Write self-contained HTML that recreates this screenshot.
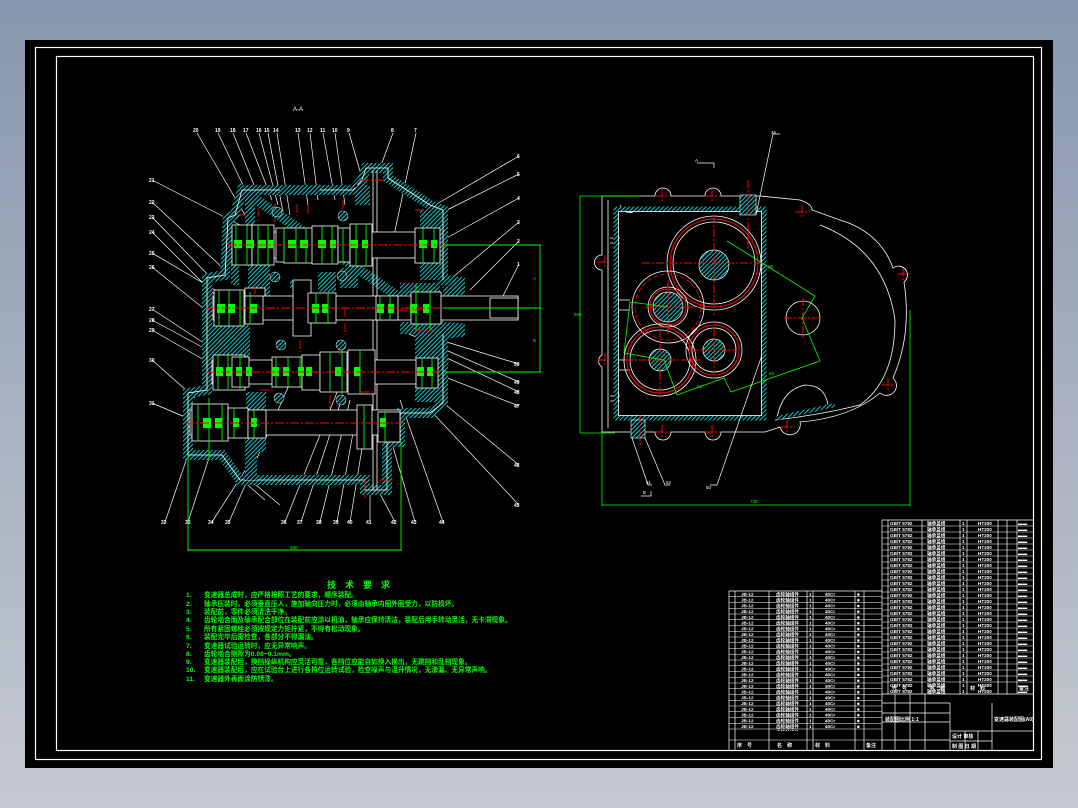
<!DOCTYPE html>
<html><head><meta charset="utf-8">
<style>
html,body{margin:0;padding:0;width:1078px;height:808px;overflow:hidden;background:linear-gradient(#8797ad,#c6cad2);}
svg{display:block}
text{font-family:"Liberation Sans","Noto Sans CJK SC",sans-serif}
</style></head><body>
<svg width="1078" height="808" viewBox="0 0 1078 808" xmlns="http://www.w3.org/2000/svg">
<defs>
<pattern id="h" patternUnits="userSpaceOnUse" width="3" height="3" patternTransform="rotate(45)">
<rect width="3" height="3" fill="#000"/><line x1="0" y1="0" x2="0" y2="3" stroke="#1ee" stroke-width="1.7"/>
</pattern>
<pattern id="tl" patternUnits="userSpaceOnUse" x="729" y="591" width="153" height="5.75">
<g fill="#fff" font-size="4.6" font-weight="bold">
<text x="12" y="4.6">JB-12</text><text x="47" y="4.6">齿轮轴组件</text><text x="80" y="4.6">1</text><text x="96" y="4.6">40Cr</text><text x="128" y="4.6">■</text>
</g></pattern>
<pattern id="tr" patternUnits="userSpaceOnUse" x="882" y="520" width="151" height="6">
<g fill="#fff" font-size="4.6" font-weight="bold">
<text x="8" y="4.8">GB/T 5782</text><text x="45" y="4.8">轴承盖组</text><text x="80" y="4.8">1</text><text x="96" y="4.8">HT200</text><text x="136" y="4.8">▬▬</text>
</g></pattern>
</defs>
<rect x="25" y="40" width="1028" height="728" fill="#000"/>
<rect x="35.5" y="47.5" width="1006" height="712" fill="none" stroke="#fff" stroke-width="1.2"/>
<rect x="56.5" y="56.5" width="977" height="694" fill="none" stroke="#fff" stroke-width="1.2"/>

<!-- ===== LEFT SECTION VIEW ===== -->
<text x="293" y="111" fill="#fff" font-size="6">A-A</text>
<g stroke="#fff" stroke-width="0.7" fill="none">
<path d="M197,133 L245,215 M218,133 L255,210 M233,133 L262,205 M246,133 L272,200 M259,133 L278,205 M268,133 L283,212 M277,133 L290,215 M298,133 L308,205 M310,133 L318,200 M323,133 L335,200 M335,133 L345,205 M349,133 L362,178 M393,133 L380,168 M416,133 L393,240"/>
<path d="M519,156 L430,208 M519,174 L443,212 M519,198 L443,240 M519,222 L447,282 M519,241 L470,290 M519,264 L500,302 M519,364 L440,340 M519,382 L400,330 M519,392 L430,350 M519,406 L440,375 M519,465 L440,400 M519,505 L430,410"/>
<path d="M152,180 L240,225 M152,202 L225,270 M152,217 L213,280 M152,232 L218,298 M152,253 L232,300 M152,267 L218,320 M152,309 L222,355 M152,320 L230,362 M152,330 L225,372 M152,360 L195,398 M152,403 L192,420"/>
<path d="M165,522 L205,405 M188,522 L210,455 M212,522 L258,450 M229,522 L300,360 M285,522 L338,390 M301,522 L343,395 M320,522 L350,400 M337,522 L358,405 M350,522 L365,430 M370,522 L370,495 M395,522 L378,490 M415,522 L388,430 M443,522 L400,400 M242,480 L265,500 M250,480 L280,505"/>
</g>
<g fill="#fff" font-size="5" font-weight="bold">
<text x="193" y="132">20</text><text x="215" y="132">19</text><text x="230" y="132">18</text><text x="243" y="132">17</text><text x="256" y="132">16</text><text x="264" y="132">15</text><text x="273" y="132">14</text><text x="295" y="132">13</text><text x="307" y="132">12</text><text x="320" y="132">11</text><text x="332" y="132">10</text><text x="347" y="132">9</text><text x="391" y="132">8</text><text x="414" y="132">7</text>
<text x="517" y="158">6</text><text x="517" y="176">5</text><text x="517" y="200">4</text><text x="517" y="224">3</text><text x="517" y="243">2</text><text x="517" y="266">1</text>
<text x="514" y="366">50</text><text x="514" y="384">49</text><text x="514" y="394">48</text><text x="514" y="408">47</text><text x="514" y="467">46</text><text x="514" y="507">45</text>
<text x="149" y="182">21</text><text x="149" y="204">22</text><text x="149" y="219">23</text><text x="149" y="234">24</text><text x="149" y="255">25</text><text x="149" y="269">26</text><text x="149" y="311">27</text><text x="149" y="322">28</text><text x="149" y="332">29</text><text x="149" y="362">30</text><text x="149" y="405">31</text>
<text x="161" y="524">32</text><text x="185" y="524">33</text><text x="208" y="524">34</text><text x="225" y="524">35</text><text x="281" y="524">36</text><text x="297" y="524">37</text><text x="316" y="524">38</text><text x="333" y="524">39</text><text x="347" y="524">40</text><text x="366" y="524">41</text><text x="391" y="524">42</text><text x="411" y="524">43</text><text x="439" y="524">44</text>
</g>
<path d="M242,190 L353,190 L362,180 L366,168 L388,168 L388,178 L430,205 L443,210 L443,280 L460,282 L460,290 L443,292 M443,327 L460,328 L460,332 L443,334 L443,403 L430,413 L400,413 L400,442 L387,442 L387,490 L365,490 L365,480 L240,480 L222,455 L188,455 L188,393 L207,390 L207,278 L225,275 L228,218 L235,215 L242,190 Z" fill="none" stroke="url(#h)" stroke-width="10"/>
<path d="M242,190 L353,190 L362,180 L366,168 L388,168 L388,178 L430,205 L443,210 L443,280 M443,334 L443,403 L430,413 L400,413 L400,442 L387,442 L387,490 L365,490 L365,480 L240,480 L222,455 L188,455 L188,393 L207,390 L207,278 L225,275 L228,218 L235,215 L242,190" fill="none" stroke="#fff" stroke-width="0.8"/>
<rect x="231" y="225" width="8" height="60" fill="url(#h)"/>
<rect x="245" y="195" width="10" height="30" fill="url(#h)"/>
<rect x="248" y="262" width="22" height="36" fill="url(#h)"/>
<rect x="210" y="325" width="40" height="40" fill="url(#h)"/>
<rect x="246" y="392" width="20" height="60" fill="url(#h)"/>
<rect x="318" y="272" width="18" height="20" fill="url(#h)"/>
<rect x="340" y="268" width="18" height="20" fill="url(#h)"/>
<rect x="355" y="185" width="15" height="20" fill="url(#h)"/>
<rect x="420" y="210" width="20" height="70" fill="url(#h)"/>
<rect x="415" y="330" width="26" height="72" fill="url(#h)"/>
<rect x="245" y="430" width="12" height="50" fill="url(#h)"/>
<rect x="280" y="185" width="40" height="7" fill="url(#h)"/>
<rect x="310" y="360" width="40" height="10" fill="url(#h)"/>
<rect x="290" y="280" width="20" height="8" fill="url(#h)"/>
<rect x="400" y="283" width="40" height="12" fill="url(#h)"/>
<rect x="400" y="322" width="40" height="12" fill="url(#h)"/>
<path d="M373,170 V490 M377,170 V490" stroke="#fff" stroke-width="0.8"/>
<g fill="#000" stroke="#fff" stroke-width="0.8">
<rect x="238" y="232" width="200" height="26"/>
<rect x="213" y="296" width="305" height="24"/>
<rect x="490" y="298" width="28" height="20"/>
<rect x="212" y="360" width="205" height="24"/>
<rect x="190" y="410" width="210" height="25"/>
</g>
<g fill="#000" stroke="#fff" stroke-width="0.8">
<rect x="232" y="225" width="20" height="40"/><rect x="252" y="225" width="22" height="40"/><rect x="276" y="228" width="15" height="34"/>
<rect x="284" y="228" width="30" height="35"/><rect x="312" y="226" width="26" height="38"/><rect x="338" y="228" width="12" height="34"/><rect x="350" y="224" width="22" height="42"/>
<rect x="415" y="228" width="25" height="35"/>
<rect x="214" y="290" width="30" height="36"/><rect x="245" y="292" width="18" height="32"/><rect x="245" y="288" width="20" height="8"/>
<rect x="293" y="280" width="18" height="56"/><rect x="308" y="293" width="28" height="30"/><rect x="376" y="296" width="22" height="24"/><rect x="411" y="292" width="30" height="32"/>
<rect x="213" y="355" width="32" height="35"/><rect x="232" y="357" width="17" height="30"/><rect x="272" y="357" width="30" height="30"/><rect x="302" y="355" width="18" height="35"/>
<rect x="320" y="352" width="27" height="40"/><rect x="348" y="350" width="27" height="44"/><rect x="416" y="358" width="22" height="30"/>
<rect x="192" y="404" width="36" height="37"/><rect x="228" y="408" width="20" height="30"/><rect x="248" y="410" width="18" height="28"/><rect x="357" y="405" width="15" height="44"/><rect x="378" y="412" width="22" height="30"/>
</g>
<g stroke="#0f0" stroke-width="0.9">
<path d="M236,225V265 M247,225V265 M258,225V265 M268,225V265 M284,228V262 M296,228V263 M306,228V263 M322,226V264 M332,226V264 M343,228V262 M356,224V266 M366,224V266 M423,228V263 M434,228V263"/>
<path d="M219,290V326 M229,290V326 M240,290V326 M250,292V324 M316,293V323 M328,293V323 M380,296V320 M390,296V320 M416,284V330 M430,290V330"/>
<path d="M218,355V390 M228,355V390 M240,355V390 M276,357V387 M288,357V387 M300,357V387 M330,352V392 M342,350V394 M360,350V394 M422,358V388 M432,358V388"/>
<path d="M198,404V441 M209,398V460 M222,404V441 M234,408V438 M254,410V438 M364,405V449 M385,412V442"/>
</g>
<g fill="#0f0">
<rect x="234" y="240" width="8" height="8"/><rect x="246" y="240" width="8" height="8"/><rect x="258" y="240" width="8" height="8"/><rect x="268" y="240" width="6" height="8"/><rect x="288" y="240" width="8" height="8"/><rect x="300" y="240" width="8" height="8"/><rect x="318" y="240" width="8" height="8"/><rect x="330" y="240" width="6" height="8"/><rect x="350" y="240" width="8" height="8"/><rect x="362" y="240" width="6" height="8"/><rect x="419" y="240" width="8" height="8"/><rect x="431" y="240" width="6" height="8"/>
<rect x="217" y="304" width="8" height="9"/><rect x="228" y="304" width="7" height="9"/><rect x="250" y="304" width="7" height="9"/><rect x="312" y="304" width="7" height="9"/><rect x="322" y="304" width="6" height="9"/><rect x="377" y="304" width="7" height="9"/><rect x="388" y="304" width="6" height="9"/><rect x="410" y="304" width="7" height="9"/><rect x="423" y="304" width="6" height="9"/>
<rect x="216" y="367" width="7" height="9"/><rect x="226" y="367" width="6" height="9"/><rect x="236" y="367" width="6" height="9"/><rect x="246" y="367" width="6" height="9"/><rect x="272" y="367" width="7" height="9"/><rect x="283" y="367" width="6" height="9"/><rect x="298" y="367" width="6" height="9"/><rect x="306" y="367" width="6" height="9"/><rect x="335" y="367" width="6" height="9"/><rect x="354" y="367" width="6" height="9"/><rect x="417" y="367" width="7" height="9"/><rect x="427" y="367" width="6" height="9"/>
<rect x="203" y="418" width="8" height="10"/><rect x="215" y="418" width="7" height="10"/><rect x="233" y="418" width="6" height="9"/><rect x="251" y="418" width="6" height="9"/><rect x="380" y="418" width="6" height="9"/>
</g>
<g stroke="#f00" stroke-width="0.9" stroke-dasharray="9,2,2,2" fill="none">
<path d="M228,245 H445 M206,308 H535 M206,372 H440 M185,423 H410"/>
<path d="M236,215H250 M258,208V222 M275,203V222 M297,204V216 M308,205V215 M343,200V212 M360,180H385 M415,210H432 M398,310H420 M415,330H433 M255,285V300 M345,308V335 M300,340V352 M340,342V356 M260,390H275 M330,395V410 M360,392H375 M380,480H395 M365,480V498"/>
</g>
<g fill="url(#h)" stroke="#fff" stroke-width="0.5">
<circle cx="277" cy="212" r="5"/><circle cx="343" cy="216" r="5"/><circle cx="275" cy="277" r="5"/><circle cx="342" cy="276" r="5"/><circle cx="281" cy="345" r="5"/><circle cx="341" cy="345" r="5"/><circle cx="279" cy="398" r="5"/><circle cx="341" cy="400" r="5"/>
</g>
<g stroke="#0f0" stroke-width="0.9" fill="none">
<path d="M188,455 V551 M401,442 V551 M188,550 H401 M443,245 H541 M443,308 H541 M443,372 H541 M540,245 V372"/>
</g>
<g fill="#0f0" font-size="4.5"><text x="290" y="549">580</text><text x="533" y="280">A</text><text x="533" y="342">B</text></g>

<!-- ===== RIGHT VIEW ===== -->
<g stroke="#fff" stroke-width="0.8" fill="none">
<path d="M602,196 H655 A8,8 0 0 1 671,196 H705 A8,8 0 0 1 721,196 H760 L800,200 Q812,204 812,210 L840,220 Q880,232 893,268 A8,8 0 0 1 904,282 Q912,335 893,378 A8,8 0 0 1 880,393 Q850,418 800,422 A8,8 0 0 1 780,427 L765,432 H721 A8,8 0 0 1 705,432 H671 A8,8 0 0 1 655,432 H602 V367 A7,7 0 0 1 602,355 V270 A7,7 0 0 1 602,255 Z"/>
<path d="M608,200 V428 M620,205 Q625,215 633,212 M820,225 Q885,250 895,320 Q895,380 860,405 Q820,415 775,420"/>
<path d="M777,418 Q782,390 805,385 Q825,385 828,405"/>
<path d="M617,300 H630 M617,310 H630 M617,360H630 M617,370H630 M610,238H620 M610,243H620 M610,396H620 M610,401H620"/>
</g>
<rect x="616" y="209" width="148" height="209" fill="none" stroke="url(#h)" stroke-width="5"/>
<rect x="618.5" y="211.5" width="143" height="204" fill="none" stroke="#fff" stroke-width="0.8"/>
<rect x="740" y="195" width="16" height="20" fill="url(#h)" stroke="#fff" stroke-width="0.6"/>
<rect x="631" y="420" width="14" height="18" fill="url(#h)" stroke="#fff" stroke-width="0.6"/>
<path d="M777,418 L835,405" stroke="url(#h)" stroke-width="4"/>
<g fill="none">
<circle cx="714" cy="263" r="47" stroke="#fff" stroke-width="0.8"/><circle cx="714" cy="263" r="44" stroke="#f00" stroke-width="1"/><circle cx="714" cy="263" r="41" stroke="#fff" stroke-width="0.8"/>
<circle cx="668" cy="307" r="36" stroke="#fff" stroke-width="0.8"/><circle cx="668" cy="307" r="33" stroke="#f00" stroke-width="0.8" stroke-dasharray="5,2"/>
<circle cx="668" cy="307" r="20" stroke="#fff" stroke-width="0.8"/><circle cx="668" cy="307" r="18" stroke="#f00" stroke-width="1"/>
<circle cx="660" cy="360" r="36" stroke="#fff" stroke-width="0.8"/><circle cx="660" cy="360" r="33" stroke="#f00" stroke-width="1"/><circle cx="660" cy="360" r="30" stroke="#fff" stroke-width="0.8"/>
<circle cx="714" cy="350" r="28" stroke="#fff" stroke-width="0.8"/><circle cx="714" cy="350" r="25" stroke="#f00" stroke-width="1"/><circle cx="714" cy="350" r="22" stroke="#fff" stroke-width="0.8"/>
<circle cx="803" cy="318" r="17" stroke="#fff" stroke-width="0.8"/>
</g>
<g fill="url(#h)" stroke="#fff" stroke-width="0.7">
<circle cx="714" cy="265" r="15"/><circle cx="668" cy="307" r="15"/><circle cx="660" cy="360" r="11"/><circle cx="714" cy="350" r="11"/>
</g>
<g stroke="#f00" stroke-width="1" stroke-dasharray="8,2,2,2">
<path d="M642,263H765 M714,215V315 M645,307H702 M668,280V335 M625,360H700 M660,330V398 M690,350H735 M714,328V372 M784,318H822 M803,298V338"/>
<path d="M662,189V203 M655,196H670 M712,189V203 M705,196H720 M795,212H810 M802,205V219 M898,274H910 M903,268V281 M881,385H895 M888,378V392 M780,427H795 M787,420V434 M712,425V439 M705,432H720 M662,425V439 M655,432H670 M598,262H612 M605,255V269 M598,360H612 M605,353V367 M748,180V250 M640,415V445"/>
</g>
<g stroke="#0f0" stroke-width="0.8" fill="none">
<path d="M727,241 L815,296 L802,318 L820,361 L731,392 L724,378 L677,395 L664,360 L624,353 L630,302 L668,307"/>
<path d="M580,196 H640 M580,433 H615 M580,196 V433 M602,433 V506 M910,310 V506 M602,505 H910"/>
</g>
<g stroke="#fff" stroke-width="0.7" fill="none">
<path d="M756,215 L773,134 H780 M632,438 L648,485 H652 M645,438 L665,485 H670 M762,355 L717,485 H710 M651,491V496H641 M697,163H714V168"/>
</g>
<g fill="#fff" font-size="4.5"><text x="771" y="134">46</text><text x="646" y="484">51</text><text x="666" y="484">52</text><text x="706" y="489">50</text><text x="695" y="162">A</text><text x="643" y="494">B</text></g>
<g fill="#0f0" font-size="4.5"><text x="574" y="316">500</text><text x="750" y="503">730</text><text x="768" y="268">80</text><text x="769" y="375">60</text><text x="697" y="388">40</text></g>

<!-- ===== TECH REQUIREMENTS ===== -->
<g fill="#0f0" font-family="'Liberation Sans','Noto Sans CJK SC',sans-serif" font-weight="bold">
<text x="327" y="588" font-size="9">技　术　要　求</text>
<g font-size="6.7">
<text x="186" y="597">1.</text><text x="204" y="597">变速器总成时，应严格按照工艺的要求，顺序装配。</text>
<text x="186" y="606">2.</text><text x="204" y="606">轴承压装时，必须垂直压入，施加轴向压力时，必须由轴承内圈外圈受力，以防损坏。</text>
<text x="186" y="614">3.</text><text x="204" y="614">装配前，零件必须清洗干净。</text>
<text x="186" y="622">4.</text><text x="204" y="622">齿轮啮合面及轴承配合部位在装配前应涂以机油，轴承应保持清洁，装配后用手转动灵活，无卡滞现象。</text>
<text x="186" y="631">5.</text><text x="204" y="631">所有紧固螺栓必须按规定力矩拧紧，不得有松动现象。</text>
<text x="186" y="639">6.</text><text x="204" y="639">装配完毕后需检查，各部分不得漏油。</text>
<text x="186" y="648">7.</text><text x="204" y="648">变速器试验运转时，应无异常响声。</text>
<text x="186" y="656">8.</text><text x="204" y="656">齿轮啮合侧隙为0.08~0.1mm。</text>
<text x="186" y="664">9.</text><text x="204" y="664">变速器装配后，换挡操纵机构应灵活可靠，各挡位应能自如换入换出，无跳挡和乱挡现象。</text>
<text x="186" y="672">10.</text><text x="204" y="672">变速器装配后，应在试验台上进行各挡位运转试验，检查噪声与温升情况，无渗漏、无异常声响。</text>
<text x="186" y="681">11.</text><text x="204" y="681">变速器外表面涂防锈漆。</text>
</g></g>

<!-- ===== TABLES ===== -->
<rect x="729" y="591" width="153" height="140" fill="url(#tl)"/>
<rect x="882" y="520" width="151" height="174" fill="url(#tr)"/>
<g stroke="#fff" stroke-width="0.7" fill="none">
<path d="M729,591V750 M735,591V750 M769,591V750 M807,591V750 M813,591V750 M855,591V750 M864,591V750 M882,520V750 M729,591H882"/>
<path d="M888,520V694 M922,520V694 M960,520V694 M967,520V694 M998,520V694 M1007,520V694 M1017,520V694 M882,520H1033"/>
<path d="M950,703V750 M992,703V750 M882,694H1033 M882,703H950 M950,731H1033 M882,722H950 M882,713H950 M950,741H992 M882,740H950"/>
<path d="M895,694V750 M910,694V750 M925,694V750 M965,731V750 M978,731V750"/>
</g>
<g stroke="#fff" stroke-width="0.6">
<path d="M729,596.75H882 M729,602.5H882 M729,608.25H882 M729,614H882 M729,619.75H882 M729,625.5H882 M729,631.25H882 M729,637H882 M729,642.75H882 M729,648.5H882 M729,654.25H882 M729,660H882 M729,665.75H882 M729,671.5H882 M729,677.25H882 M729,683H882 M729,688.75H882 M729,694.5H882 M729,700.25H882 M729,706H882 M729,711.75H882 M729,717.5H882 M729,723.25H882 M729,729H882 M729,740H882"/>
<path d="M882,526H1033 M882,532H1033 M882,538H1033 M882,544H1033 M882,550H1033 M882,556H1033 M882,562H1033 M882,568H1033 M882,574H1033 M882,580H1033 M882,586H1033 M882,592H1033 M882,598H1033 M882,604H1033 M882,610H1033 M882,616H1033 M882,622H1033 M882,628H1033 M882,634H1033 M882,640H1033 M882,646H1033 M882,652H1033 M882,658H1033 M882,664H1033 M882,670H1033 M882,676H1033 M882,682H1033"/>
</g>
<g fill="#fff" font-size="5" font-weight="bold">
<text x="737" y="747">序　号</text><text x="777" y="747">名　称</text><text x="815" y="747">材　料</text><text x="866" y="747">备注</text>
<text x="892" y="690">代　号</text><text x="930" y="690">名　称</text><text x="970" y="690">材　料</text><text x="1019" y="690">备注</text>
<text x="885" y="721">装配图比例 1:1</text><text x="994" y="721">变速器装配图(A0)</text>
<text x="952" y="738">设计 审核</text><text x="952" y="748">制 图 日 期</text>
</g>
</svg>
</body></html>
